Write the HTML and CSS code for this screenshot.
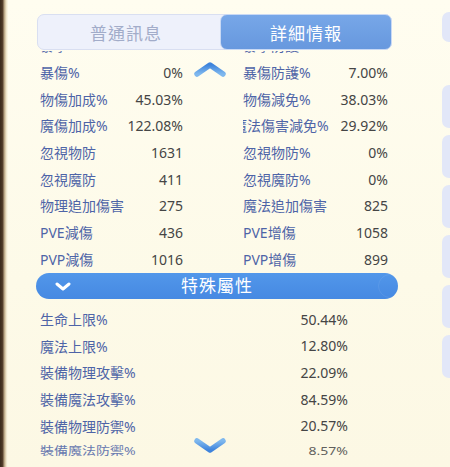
FILE: index.html
```html
<!DOCTYPE html>
<html lang="zh-Hant">
<head>
<meta charset="utf-8">
<title>詳細情報</title>
<link rel="stylesheet" href="styles.css">
</head>
<body>
<div class="screen">
  <div class="edge"></div>
  <main class="panel">
    <div class="tabs">
      <div class="tab">普通訊息</div>
      <div class="tab active">詳細情報</div>
    </div>

    <div class="top-list">
      <div class="grid">
        <div class="cell"><span class="label">暴擊%</span><span class="value">0%</span></div>
        <div class="cell"><span class="label">暴擊防護%</span><span class="value">0%</span></div>
        <div class="cell"><span class="label">暴傷%</span><span class="value">0%</span></div>
        <div class="cell"><span class="label">暴傷防護%</span><span class="value">7.00%</span></div>
        <div class="cell"><span class="label">物傷加成%</span><span class="value">45.03%</span></div>
        <div class="cell"><span class="label">物傷減免%</span><span class="value">38.03%</span></div>
        <div class="cell"><span class="label">魔傷加成%</span><span class="value">122.08%</span></div>
        <div class="cell"><span class="label clip">魔法傷害減免%</span><span class="value">29.92%</span></div>
        <div class="cell"><span class="label">忽視物防</span><span class="value">1631</span></div>
        <div class="cell"><span class="label">忽視物防%</span><span class="value">0%</span></div>
        <div class="cell"><span class="label">忽視魔防</span><span class="value">411</span></div>
        <div class="cell"><span class="label">忽視魔防%</span><span class="value">0%</span></div>
        <div class="cell"><span class="label">物理追加傷害</span><span class="value">275</span></div>
        <div class="cell"><span class="label">魔法追加傷害</span><span class="value">825</span></div>
        <div class="cell"><span class="label">PVE減傷</span><span class="value">436</span></div>
        <div class="cell"><span class="label">PVE增傷</span><span class="value">1058</span></div>
        <div class="cell"><span class="label">PVP減傷</span><span class="value">1016</span></div>
        <div class="cell"><span class="label">PVP增傷</span><span class="value">899</span></div>
      </div>
    </div>

    <div class="banner">
      <svg class="banner-chev" viewBox="0 0 16 9" width="16" height="9"><polyline points="2,2 8,7 14,2" fill="none" stroke="#ffffff" stroke-width="3" stroke-linecap="round" stroke-linejoin="round"/></svg>
      <span class="banner-title">特殊屬性</span>
      <span class="banner-deco"></span>
    </div>

    <div class="bottom-list">
      <div class="row"><span class="label">生命上限%</span><span class="value">50.44%</span></div>
      <div class="row"><span class="label">魔法上限%</span><span class="value">12.80%</span></div>
      <div class="row"><span class="label">裝備物理攻擊%</span><span class="value">22.09%</span></div>
      <div class="row"><span class="label">裝備魔法攻擊%</span><span class="value">84.59%</span></div>
      <div class="row"><span class="label">裝備物理防禦%</span><span class="value">20.57%</span></div>
      <div class="row squash"><span class="label">裝備魔法防禦%</span><span class="value">8.57%</span></div>
    </div>

    <svg class="chev chev-up" viewBox="0 0 32 15" width="32" height="15">
      <defs><linearGradient id="gu" x1="0" y1="0" x2="0" y2="1"><stop offset="0" stop-color="#3f84dc"/><stop offset="1" stop-color="#7fb8ee"/></linearGradient></defs>
      <polyline points="3,12 16,3 29,12" fill="none" stroke="url(#gu)" stroke-width="5.5" stroke-linecap="round" stroke-linejoin="round"/>
    </svg>
    <svg class="chev chev-down" viewBox="0 0 32 15" width="32" height="15">
      <defs><linearGradient id="gd" x1="0" y1="0" x2="0" y2="1"><stop offset="0" stop-color="#7fb8ee"/><stop offset="1" stop-color="#3f84dc"/></linearGradient></defs>
      <polyline points="3,3 16,12 29,3" fill="none" stroke="url(#gd)" stroke-width="5.5" stroke-linecap="round" stroke-linejoin="round"/>
    </svg>
  </main>
  <aside class="side">
    <div class="card first"></div>
    <div class="card"></div>
    <div class="card"></div>
    <div class="card"></div>
    <div class="card"></div>
    <div class="card"></div>
    <div class="card"></div>
  </aside>
</div>
</body>
</html>
```

FILE: styles.css
```css
* { box-sizing: border-box; }

html, body {
  margin: 0;
  padding: 0;
  width: 450px;
  height: 467px;
  overflow: hidden;
  background: #fefcec;
  font-family: "Noto Sans", "Noto Sans CJK TC", sans-serif;
}

.screen {
  display: flex;
  width: 450px;
  height: 467px;
  background: linear-gradient(180deg, #fffdf0 0%, #fdfae8 60%, #fcf8e4 100%);
}

.edge {
  width: 8px;
  flex: none;
  background: linear-gradient(90deg, #3a2a1c 0, #4d3826 30%, #cdbb98 60%, #f6efd8 85%, #fdfae8 100%);
}

.panel {
  position: relative;
  width: 434px;
  flex: none;
  padding-left: 29px;
}

.tabs {
  position: relative;
  z-index: 2;
  display: flex;
  margin-top: 14px;
  width: 355px;
  height: 36px;
  background: #eef1fb;
  border: 1px solid #d9dff1;
  border-radius: 7px;
}

.tab {
  display: flex;
  align-items: center;
  justify-content: center;
  font-size: 17px;
  color: #a2acc9;
  letter-spacing: 1px;
}

.tab:first-child {
  width: 176px;
}

.tab.active {
  flex: 1;
  margin: -1px -1px -1px 6px;
  background: linear-gradient(180deg, #77a7e8 0%, #6798de 100%);
  border: 1px solid #c9d9f4;
  border-radius: 7px;
  color: #ffffff;
}

.top-list {
  margin-top: 1px;
  height: 222px;
  overflow: hidden;
  padding-left: 3px;
}

.grid {
  margin-top: -17.7px;
  display: grid;
  grid-template-columns: 143px 145px;
  column-gap: 60px;
  grid-auto-rows: 26.67px;
}

.cell {
  display: grid;
  grid-template-columns: 1fr auto;
  column-gap: 12px;
  align-items: center;
  font-size: 14px;
  line-height: 26.67px;
}

.label {
  color: #4e64a7;
  white-space: nowrap;
  overflow: hidden;
  min-width: 0;
}

.label.clip {
  display: flex;
  justify-content: flex-end;
}

.value {
  color: #454545;
  text-align: right;
  white-space: nowrap;
}

.banner {
  display: grid;
  grid-template-columns: 1fr auto 1fr;
  align-items: center;
  margin-left: -1px;
  width: 362px;
  height: 26px;
  border-radius: 13px;
  background: linear-gradient(180deg, #5297ea 0%, #4689e2 100%);
  position: relative;
  overflow: hidden;
}

.banner-chev {
  margin-left: 19px;
}

.banner-title {
  color: #ffffff;
  font-size: 17px;
  letter-spacing: 1px;
  line-height: 26px;
}

.banner-deco {
  justify-self: end;
  width: 24px;
  height: 24px;
  margin-right: -4px;
  border-radius: 50%;
  border: 1px solid rgba(255, 255, 255, 0.08);
}

.bottom-list {
  height: 157px;
  overflow: hidden;
  padding-top: 7px;
  padding-left: 3px;
  width: 311px;
}

.row {
  display: grid;
  grid-template-columns: 1fr auto;
  align-items: center;
  height: 26.6px;
  font-size: 14px;
}

.row.squash {
  transform: scaleY(0.82);
  transform-origin: top;
  opacity: 0.85;
}

.chev {
  position: absolute;
  left: 186px;
  z-index: 3;
}

.chev-up { top: 62px; }
.chev-down { top: 438px; }

.side {
  width: 8px;
  flex: none;
  display: flex;
  flex-direction: column;
  gap: 7px;
}

.card {
  height: 43px;
  background: #e2e7f8;
  border-radius: 7px 0 0 7px;
}

.card.first {
  margin-top: 12px;
  height: 30px;
  margin-bottom: 36px;
}
```
